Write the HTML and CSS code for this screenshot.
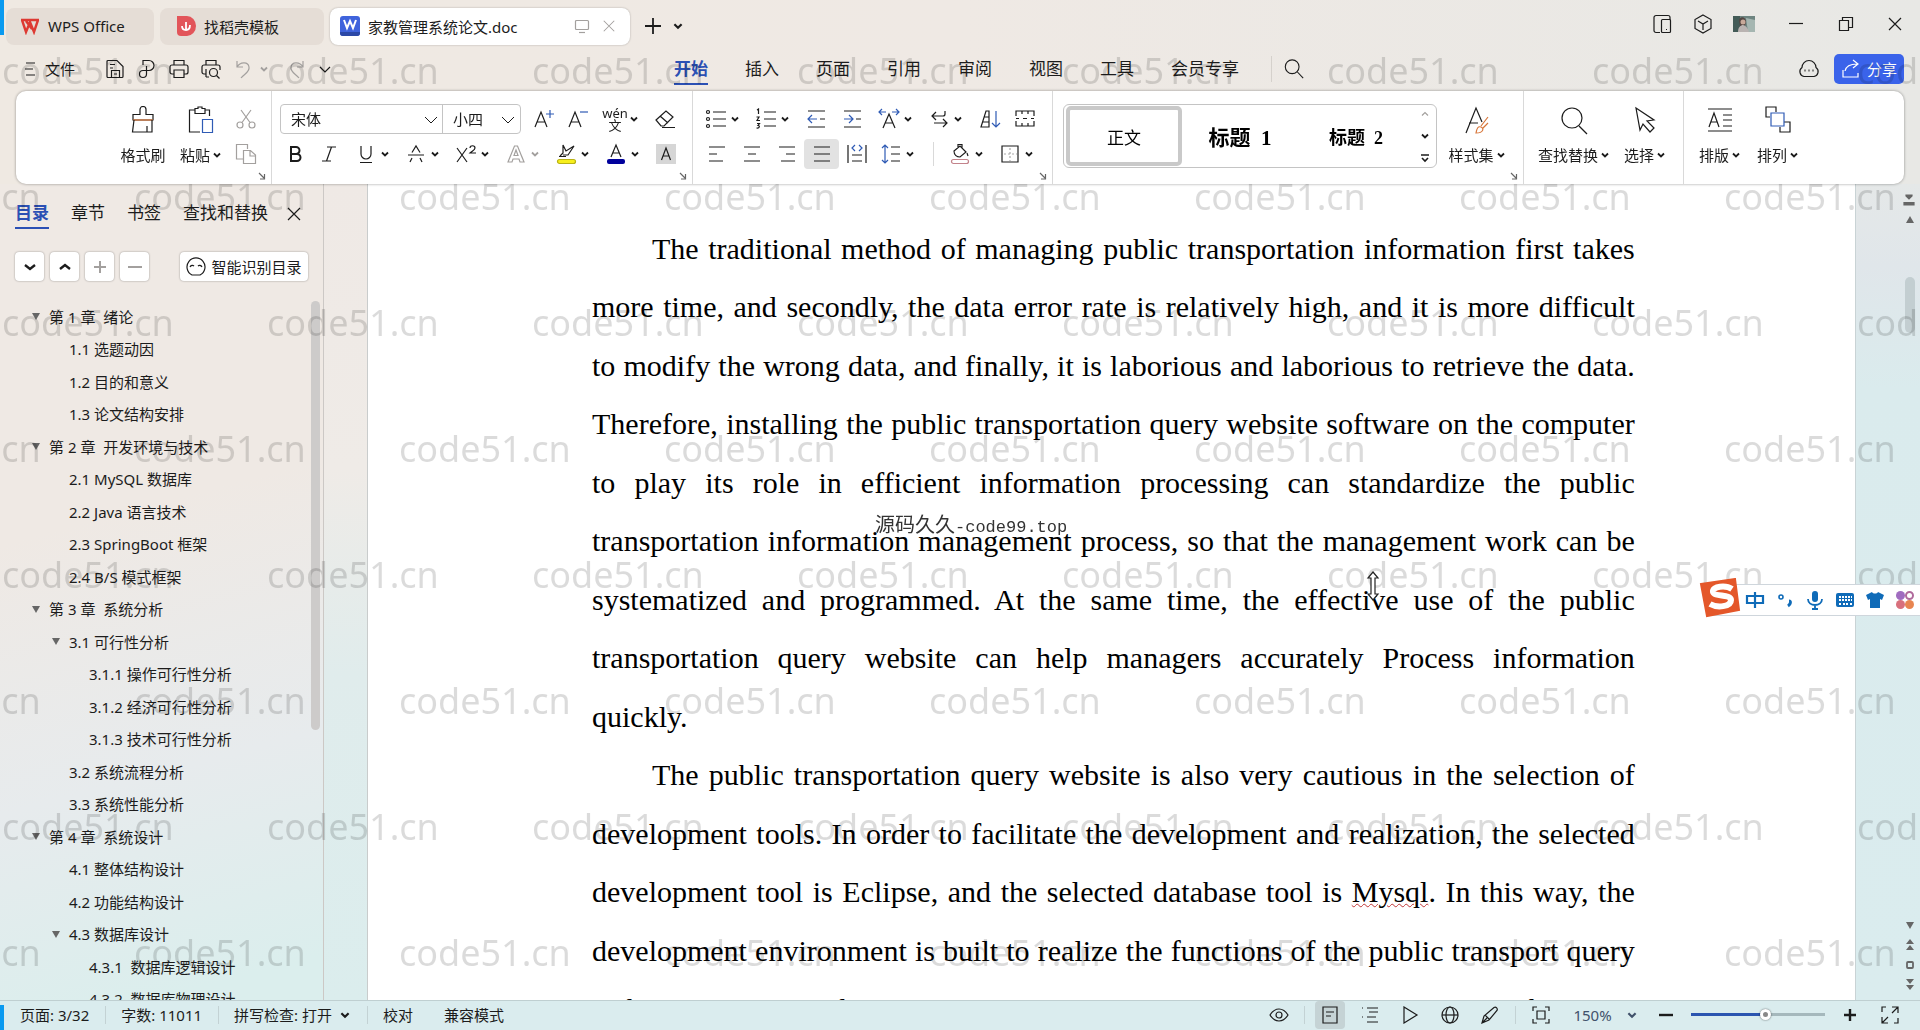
FILE: index.html
```html
<!DOCTYPE html>
<html lang="zh-CN">
<head>
  <meta charset="UTF-8">
  <meta name="viewport" content="width=device-width, initial-scale=1.0">
  <title>家教管理系统论文.doc - WPS Office</title>
  <link rel="stylesheet" href="styles.css">
</head>
<body>
  <!-- Shared icons -->
  <svg class="sprite" width="0" height="0">
    <symbol id="caret" viewBox="0 0 10 10"><path d="M2 3.5l3 3 3-3" stroke-width="1.8"/></symbol>
    <symbol id="corner" viewBox="0 0 8 8"><path d="M1 1l5 5M6.500 2v5H2"/></symbol>
    <symbol id="tri" viewBox="0 0 10 10"><path d="M1 2h8L5 9z" fill="#666" stroke="none"/></symbol>
    <symbol id="close" viewBox="0 0 16 16"><path d="M2 2l12 12M14 2L2 14"/></symbol>
    <symbol id="search" viewBox="0 0 24 24"><circle cx="10" cy="9.500" r="7.500"/><path d="M15.500 15l6.500 7"/></symbol>
  </svg>

  <header class="title-bar">
    <div class="edge-mark"></div>
    <nav class="doc-tabs">
      <button class="doc-tab tab-home">
        <svg width="20" height="18" viewBox="0 0 20 18"><path d="M1 3h18M2 3l4 12 4-10 4 10 4-12M6 4l6 8" stroke="#dd3a33" stroke-width="2.400"/></svg>
        <span>WPS Office</span>
      </button>
      <button class="doc-tab tab-docer">
        <svg width="20" height="20" viewBox="0 0 20 20"><path d="M1 0h10a9 10 0 0 1 0 20H5a4 4 0 0 1-4-4z" fill="#e2555a" stroke="none"/><path d="M10 15V6M10 14c-3 0-4-2-4-4M10 14c3 0 4-2 4-5" stroke="#fff" stroke-width="1.800"/></svg>
        <span>找稻壳模板</span>
      </button>
      <button class="doc-tab tab-doc active">
        <svg width="20" height="20" viewBox="0 0 20 20"><rect width="20" height="20" rx="3" fill="#3f63dc" stroke="none"/><path d="M0 16h20v1a3 3 0 0 1-3 3H3a3 3 0 0 1-3-3z" fill="#2c48a6" stroke="none"/><path d="M4 4l3 8 3-7 3 7 3-8" stroke="#fff" stroke-width="2"/></svg>
        <span class="doc-name">家教管理系统论文.doc</span>
        <svg class="dim" width="16" height="16" viewBox="0 0 16 16"><rect x="1.500" y="2.500" width="13" height="9" rx="1"/><path d="M5 14.500h6"/></svg>
        <svg class="dim" width="14" height="14"><use href="#close"/></svg>
      </button>
    </nav>
    <button class="icon-btn" aria-label="新建"><svg width="18" height="18" viewBox="0 0 18 18"><path d="M9 1v16M1 9h16" stroke-width="1.800"/></svg></button>
    <button class="caret-btn" aria-label="更多"><svg width="12" height="12"><use href="#caret"/></svg></button>
    <div class="window-tools">
      <button aria-label="侧栏"><svg width="20" height="20" viewBox="0 0 20 20"><path d="M8 18.500H4a2 2 0 0 1-2-2v-13a2 2 0 0 1 2-2h12a2 2 0 0 1 2 2V6"/><rect x="9.500" y="5.500" width="9" height="13" rx="1"/><path d="M14 15.500h1"/></svg></button>
      <button aria-label="应用"><svg width="20" height="20" viewBox="0 0 20 20"><path d="M10 1l8 4.500v9L10 19l-8-4.500v-9zM5 7l5 3 5-3M10 10v6"/></svg></button>
      <button class="account" aria-label="账号"><svg width="22" height="16" viewBox="0 0 22 16"><rect width="22" height="16" fill="#6e8480" stroke="none"/><path d="M0 0h7v16H0z" fill="#435b57" stroke="none"/><path d="M13 2l9 2v12h-7z" fill="#a5b6b1" stroke="none"/><path d="M6 5c0-5 7-5 7 1l-1 4H7z" fill="#544743" stroke="none"/><circle cx="10" cy="6" r="2.500" fill="#c8a999" stroke="none"/><path d="M5 16c0-5 3-7 5-7s5 3 6 7z" fill="#b9b3b1" stroke="none"/></svg></button>
      <button aria-label="最小化"><svg width="16" height="16" viewBox="0 0 16 16"><path d="M1 7.500h14"/></svg></button>
      <button aria-label="还原"><svg width="16" height="16" viewBox="0 0 16 16"><path d="M1.500 4.500h9v10h-9zM4.500 4V1.500h10v10H11"/></svg></button>
      <button aria-label="关闭"><svg width="16" height="16"><use href="#close"/></svg></button>
    </div>
  </header>

  <div class="menu-row">
    <div class="quick">
      <button class="file-btn">
        <svg width="12" height="16" viewBox="0 0 12 16"><path d="M2 2h9M1 8h8M2 14h9"/></svg>
        <span>文件</span>
      </button>
      <button aria-label="保存"><svg width="20" height="20" viewBox="0 0 20 20"><path d="M2 17.500v-15a1 1 0 0 1 1-1h9l6 6v10a1 1 0 0 1-1 1H3a1 1 0 0 1-1-1zM5 5.500h5M5 9h3M6.500 18v-6.500h8V18M9 15h3"/></svg></button>
      <button aria-label="输出"><svg width="20" height="20" viewBox="0 0 20 20"><path d="M6 6V1.500h6a5 5 0 0 1 0 10H6a3.500 3.500 0 1 0 3.500 3.500V7"/></svg></button>
      <button aria-label="打印"><svg width="20" height="20" viewBox="0 0 20 20"><path d="M5 6V1.500h10V6M5 15H3a2 2 0 0 1-2-2V8a2 2 0 0 1 2-2h14a2 2 0 0 1 2 2v5a2 2 0 0 1-2 2h-2M5 11h10v7.500H5z"/></svg></button>
      <button aria-label="打印预览"><svg width="20" height="20" viewBox="0 0 20 20"><path d="M5 6V1.500h10V6M5 15H3a2 2 0 0 1-2-2V8a2 2 0 0 1 2-2h14a2 2 0 0 1 2 2v3M5 18V10M5 18h3"/><circle cx="12.500" cy="13.500" r="4"/><path d="M15.500 16.500l3 3"/></svg></button>
      <button class="dim undo" aria-label="撤销"><svg width="20" height="20" viewBox="0 0 20 20"><path d="M4 2v6h6M4 8c3-5 11-6 12 0 1 5-5 7-8 11"/></svg><svg width="10" height="10"><use href="#caret"/></svg></button>
      <button class="dim" aria-label="重做"><svg width="20" height="20" viewBox="0 0 20 20"><path d="M16 2v6h-6M16 8C13 3 5 2 4 8c-1 5 5 7 8 11"/></svg></button>
      <button aria-label="自定义"><svg width="12" height="12" viewBox="0 0 12 12"><path d="M1 4l5 5 5-5"/></svg></button>
    </div>
    <nav class="menu-tabs">
      <a class="active" href="#start">开始</a>
      <a href="#insert">插入</a>
      <a href="#page">页面</a>
      <a href="#refs">引用</a>
      <a href="#review">审阅</a>
      <a href="#view">视图</a>
      <a href="#tools">工具</a>
      <a href="#vip">会员专享</a>
    </nav>
    <button class="search-btn" aria-label="搜索"><svg width="22" height="22"><use href="#search"/></svg></button>
    <div class="menu-right">
      <button aria-label="云"><svg width="22" height="20" viewBox="0 0 22 20"><path d="M6 17.500a5 5 0 0 1-2-9 7 7 0 0 1 14 0 5 5 0 0 1-2 9z"/><path d="M6.500 11.500h1M10.500 11.500h1M14.500 11.500h1" stroke-width="2"/></svg></button>
      <button class="share">
        <svg width="20" height="20" viewBox="0 0 20 20"><path d="M2 11v7h15v-4M4 12c1-5 5-7 12-7M12 1l5 4-5 4"/></svg>
        <span>分享</span>
      </button>
    </div>
  </div>

  <section class="ribbon" id="start">
    <div class="group clipboard">
      <button class="big">
        <svg width="26" height="28" viewBox="0 0 26 28"><path d="M3 10V8.500h7V3.500a3 3 0 0 1 6 0v5h7V14H3z"/><path d="M3 14h20" stroke="#d8763a"/><path d="M4 14L2.500 26H22V14M17 26v-6"/></svg>
        <span>格式刷</span>
      </button>
      <button class="big">
        <svg width="26" height="28" viewBox="0 0 26 28"><path d="M7 4H1.500v22H12M17 4h4.500v6M7 7.500v-5h3V1h4v1.500h3v5z"/><path d="M14.500 13.500h10v13h-10z" stroke="#2f5bb5"/></svg>
        <span>粘贴<svg width="10" height="10"><use href="#caret"/></svg></span>
      </button>
      <div class="stack dim">
        <button aria-label="剪切"><svg width="22" height="22" viewBox="0 0 22 22"><circle cx="5" cy="17" r="3"/><circle cx="17" cy="17" r="3"/><path d="M6 2l9 12.500M16 2L7 14.500"/></svg></button>
        <button aria-label="复制"><svg width="22" height="22" viewBox="0 0 22 22"><path d="M8 16H1.500V1.500h11V6M8.500 7.500h7l5 4.500v8.500h-12zM15 8v5h5"/></svg></button>
      </div>
      <svg class="corner" width="8" height="8"><use href="#corner"/></svg>
    </div>

    <div class="group font">
      <div class="row">
        <div class="combo">
          <label class="font-name"><select aria-label="字体"><option>宋体</option></select><svg width="14" height="14" viewBox="0 0 14 14"><path d="M1 4l6 6 6-6"/></svg></label>
          <label class="font-size"><select aria-label="字号"><option>小四</option></select><svg width="14" height="14" viewBox="0 0 14 14"><path d="M1 4l6 6 6-6"/></svg></label>
        </div>
        <button class="tool" aria-label="增大字号"><svg width="22" height="22" viewBox="0 0 22 22"><path d="M2 19L8 4l6 15M4 14h8"/><path d="M17 2v8M13 6h8" stroke="#2f5bb5"/></svg></button>
        <button class="tool" aria-label="减小字号"><svg width="22" height="22" viewBox="0 0 22 22"><path d="M2 19L8 4l6 15M4 14h8"/><path d="M13 4h8" stroke="#2f5bb5"/></svg></button>
        <button class="tool drop after-gap" aria-label="拼音"><span class="pinyin"><span>wén</span><span>文</span></span><svg width="10" height="10"><use href="#caret"/></svg></button>
        <button class="tool" aria-label="清除格式"><svg width="22" height="22" viewBox="0 0 22 22"><path d="M2 12L12 3l7 6-9 9H7zM6 8l8 7M8 19.500h13"/></svg></button>
      </div>
      <div class="row">
        <button class="tool" aria-label="加粗"><svg width="22" height="22" viewBox="0 0 22 22"><path d="M7 4h5a3.500 3.500 0 0 1 0 7H7zM7 11h6a3.500 3.500 0 0 1 0 7H7z" stroke-width="2"/></svg></button>
        <button class="tool" aria-label="倾斜"><svg width="22" height="22" viewBox="0 0 22 22"><path d="M9 4h9M13.500 4l-5 14M4 18h9"/></svg></button>
        <button class="tool drop after-gap" aria-label="下划线"><svg width="22" height="22" viewBox="0 0 22 22"><path d="M6 3v8a5 5 0 0 0 10 0V3M5 19.500h12"/></svg><svg width="10" height="10"><use href="#caret"/></svg></button>
        <button class="tool drop" aria-label="删除线"><svg width="22" height="22" viewBox="0 0 22 22"><path d="M3 12h16M7 9.500L11 3l4 6.500M5 19l2-4M17 19l-2-4"/></svg><svg width="10" height="10"><use href="#caret"/></svg></button>
        <button class="tool drop" aria-label="上标"><svg width="22" height="22" viewBox="0 0 22 22"><path d="M2 5l10 14M12 5L2 19M15 5c0-3 5-3 5 0 0 2-3 3-5 5h6"/></svg><svg width="10" height="10"><use href="#caret"/></svg></button>
        <button class="tool drop dim" aria-label="文字效果"><svg width="22" height="22" viewBox="0 0 22 22"><path d="M3 19L9.500 3h3L19 19h-4l-1-3H8l-1 3zM9 12.500h4L11 7z"/></svg><svg width="10" height="10"><use href="#caret"/></svg></button>
        <button class="tool drop" aria-label="突出显示"><svg width="22" height="22" viewBox="0 0 22 22"><rect x="2.500" y="16.500" width="18" height="4" rx="2" fill="#f7ef1c" stroke="#b9b215"/><path d="M4 13.500h7M5 13l3-3V2l3 6 8-5-6 9H8"/></svg><svg width="10" height="10"><use href="#caret"/></svg></button>
        <button class="tool drop" aria-label="字体颜色"><svg width="22" height="22" viewBox="0 0 22 22"><path d="M6 14l5-12 5 12M7.500 10h7"/><rect x="2" y="16" width="18" height="5" rx="2" fill="#00009c" stroke="none"/></svg><svg width="10" height="10"><use href="#caret"/></svg></button>
        <button class="tool" aria-label="字符底纹"><svg width="22" height="22" viewBox="0 0 22 22"><rect x="1" y="1" width="20" height="20" fill="#d6d6d6" stroke="none"/><path d="M6.500 17L11 5l4.500 12M8 13h6"/></svg></button>
      </div>
      <svg class="corner" width="8" height="8"><use href="#corner"/></svg>
    </div>

    <div class="group paragraph">
      <div class="row">
        <button class="tool drop" aria-label="项目符号"><svg width="22" height="22" viewBox="0 0 22 22"><path d="M8 4h13M8 11h13M8 18h13"/><circle cx="3" cy="4" r="1.500"/><circle cx="3" cy="11" r="1.500"/><circle cx="3" cy="18" r="1.500"/></svg><svg width="10" height="10"><use href="#caret"/></svg></button>
        <button class="tool drop" aria-label="编号"><svg width="22" height="22" viewBox="0 0 22 22"><path d="M9 4h12M9 11h12M9 18h12M2 2l1.500-1v5M1.500 9H4L2 12.500h3M2 15.500h2.500L3 17.500c2 0 2 3-1.500 2.500"/></svg><svg width="10" height="10"><use href="#caret"/></svg></button>
        <button class="tool" aria-label="减少缩进"><svg width="22" height="22" viewBox="0 0 22 22"><path d="M2 3h17M14 11h5M2 19h17" /><path d="M11 11H2M6 7l-4 4 4 4" stroke="#2f5bb5"/></svg></button>
        <button class="tool" aria-label="增加缩进"><svg width="22" height="22" viewBox="0 0 22 22"><path d="M3 3h17M15 11h5M3 19h17"/><path d="M3 11h9M8 7l4 4-4 4" stroke="#2f5bb5"/></svg></button>
        <button class="tool drop after-gap" aria-label="中文版式"><svg width="22" height="22" viewBox="0 0 22 22"><path d="M5 20l6-14 6 14M7 15h8"/><path d="M1 4h7M4 1L1 4l3 3M21 4h-7M18 1l3 3-3 3" stroke="#2f5bb5"/></svg><svg width="10" height="10"><use href="#caret"/></svg></button>
        <button class="tool drop" aria-label="换行"><svg width="22" height="22" viewBox="0 0 22 22"><path d="M17 3v3a2 2 0 0 1-2 2H4M8 4L4 8l4 4M6 15h13M15 11l4 4-4 4"/></svg><svg width="10" height="10"><use href="#caret"/></svg></button>
        <button class="tool" aria-label="排序"><svg width="22" height="22" viewBox="0 0 22 22"><path d="M2 19L7 3h3v16zM4 14h6M5 9h5"/><path d="M17 3v16M13 15l4 4 4-4" stroke="#2f5bb5"/></svg></button>
        <button class="tool" aria-label="制表位"><svg width="22" height="22" viewBox="0 0 22 22"><path d="M2 8V3h18v5M2 13v5h18v-5M8 3v3M14 3v3M8 18v-3M14 18v-3M2 10.500h3M9 10.500h4M17 10.500h3"/></svg></button>
      </div>
      <div class="row">
        <button class="tool" aria-label="左对齐"><svg width="22" height="22" viewBox="0 0 22 22"><path d="M3 4h16M3 11h8M3 18h14"/></svg></button>
        <button class="tool" aria-label="居中"><svg width="22" height="22" viewBox="0 0 22 22"><path d="M3 4h16M7 11h8M3 18h16"/></svg></button>
        <button class="tool" aria-label="右对齐"><svg width="22" height="22" viewBox="0 0 22 22"><path d="M3 4h16M10 11h9M5 18h14"/></svg></button>
        <button class="tool selected" aria-label="两端对齐"><svg width="22" height="22" viewBox="0 0 22 22"><path d="M3 4h16M3 11h16M3 18h16"/></svg></button>
        <button class="tool" aria-label="分散对齐"><svg width="22" height="22" viewBox="0 0 22 22"><path d="M2 2v18M20 2v18M6 12h10M6 18h10"/><path d="M9 2L6 5l3 3M13 2l3 3-3 3" stroke="#2f5bb5"/></svg></button>
        <button class="tool drop" aria-label="行距"><svg width="22" height="22" viewBox="0 0 22 22"><path d="M11 4h9M11 11h9M11 18h9"/><path d="M5 2v18M2 5l3-3 3 3M2 17l3 3 3-3" stroke="#2f5bb5"/></svg><svg width="10" height="10"><use href="#caret"/></svg></button>
        <span class="divider"></span>
        <button class="tool drop" aria-label="底纹"><svg width="22" height="22" viewBox="0 0 22 22"><path d="M5 8l6-5 6 6-6 5c-3 0-6-2-6-6zM9 5V1.500h4V5M18 10l1 3"/><rect x="2.500" y="16.500" width="17" height="4" rx="2" stroke="#c3838b"/></svg><svg width="10" height="10"><use href="#caret"/></svg></button>
        <button class="tool drop" aria-label="边框"><svg width="22" height="22" viewBox="0 0 22 22"><path d="M3 3h16v16H3z"/><path d="M11 5v13M5 11h13" stroke="#aaa" stroke-dasharray="2 2"/></svg><svg width="10" height="10"><use href="#caret"/></svg></button>
      </div>
      <svg class="corner" width="8" height="8"><use href="#corner"/></svg>
    </div>

    <div class="group styles">
      <div class="gallery">
        <button class="style-item current">正文</button>
        <button class="style-item heading-1">标题&nbsp; 1</button>
        <button class="style-item heading-2">标题&nbsp; 2</button>
        <div class="gallery-nav">
          <button class="dim" aria-label="上一行"><svg width="10" height="10" viewBox="0 0 10 10"><path d="M2 6.500l3-3 3 3"/></svg></button>
          <button aria-label="下一行"><svg width="10" height="10"><use href="#caret"/></svg></button>
          <button aria-label="展开"><svg width="10" height="10" viewBox="0 0 10 10"><path d="M1 2h8M2 5l3 3 3-3" stroke-width="1.600"/></svg></button>
        </div>
      </div>
      <button class="big">
        <svg width="28" height="30" viewBox="0 0 28 30"><path d="M3 27L13 2l6 14M6 17h9"/><path d="M25 11l-7 9M25 17l-5 5M13 27c1-5 2-7 5-6 3 1 3 6-5 6z" stroke="#d8763a"/></svg>
        <span>样式集<svg width="10" height="10"><use href="#caret"/></svg></span>
      </button>
      <svg class="corner" width="8" height="8"><use href="#corner"/></svg>
    </div>

    <div class="group editing">
      <button class="big">
        <svg width="30" height="30" viewBox="0 0 30 30"><circle cx="13" cy="12" r="10"/><path d="M20 20l8 8"/></svg>
        <span>查找替换<svg width="10" height="10"><use href="#caret"/></svg></span>
      </button>
      <button class="big">
        <svg width="28" height="28" viewBox="0 0 28 28"><path d="M5 2l18 12-7 1 7 7-4 4-7-8-3 6z"/></svg>
        <span>选择<svg width="10" height="10"><use href="#caret"/></svg></span>
      </button>
    </div>

    <div class="group layout">
      <button class="big">
        <svg width="28" height="28" viewBox="0 0 28 28"><path d="M2 3h24M2 25h24M17 9h9M17 14h9M17 20h9M3 21L8 7l5 14M5 16h6"/></svg>
        <span>排版<svg width="10" height="10"><use href="#caret"/></svg></span>
      </button>
      <button class="big">
        <svg width="28" height="28" viewBox="0 0 28 28"><path d="M6 11H2V1h10v5M20 16h6v10H16v-5"/><path d="M7 7h13v13H7z" stroke="#2f5bb5"/></svg>
        <span>排列<svg width="10" height="10"><use href="#caret"/></svg></span>
      </button>
    </div>
  </section>

  <main class="workspace">
    <aside class="outline">
      <nav class="outline-tabs">
        <a class="active" href="#toc">目录</a>
        <a href="#chapters">章节</a>
        <a href="#bookmarks">书签</a>
        <a href="#find">查找和替换</a>
        <button aria-label="关闭"><svg width="16" height="16"><use href="#close"/></svg></button>
      </nav>
      <div class="outline-tools">
        <button class="sq" aria-label="展开"><svg width="14" height="14" viewBox="0 0 14 14"><path d="M2 5l5 4 5-4" stroke-width="2.400"/></svg></button>
        <button class="sq" aria-label="收起"><svg width="14" height="14" viewBox="0 0 14 14"><path d="M2 9l5-4 5 4" stroke-width="2.400"/></svg></button>
        <button class="sq dim" aria-label="增加级别"><svg width="14" height="14" viewBox="0 0 14 14"><path d="M7 1v12M1 7h12" stroke-width="2"/></svg></button>
        <button class="sq dim" aria-label="减少级别"><svg width="14" height="14" viewBox="0 0 14 14"><path d="M0 7h14" stroke-width="2"/></svg></button>
        <button class="smart"><svg width="20" height="20" viewBox="0 0 20 20"><path d="M6 18a9 9 0 1 1 8 0zM4 10c1-2 3-2 4-1M12 9c1-1 3-1 4 1"/></svg>智能识别目录</button>
      </div>
      <div class="tree-wrap">
        <ul class="tree" id="toc">
          <li class="l1"><svg width="10" height="10"><use href="#tri"/></svg>第 1 章&nbsp; 绪论</li>
          <li class="l2">1.1 选题动因</li>
          <li class="l2">1.2 目的和意义</li>
          <li class="l2">1.3 论文结构安排</li>
          <li class="l1"><svg width="10" height="10"><use href="#tri"/></svg>第 2 章&nbsp; 开发环境与技术</li>
          <li class="l2">2.1 MySQL 数据库</li>
          <li class="l2">2.2 Java 语言技术</li>
          <li class="l2">2.3 SpringBoot 框架</li>
          <li class="l2">2.4 B/S 模式框架</li>
          <li class="l1"><svg width="10" height="10"><use href="#tri"/></svg>第 3 章&nbsp; 系统分析</li>
          <li class="l2"><svg width="10" height="10"><use href="#tri"/></svg>3.1 可行性分析</li>
          <li class="l3">3.1.1 操作可行性分析</li>
          <li class="l3">3.1.2 经济可行性分析</li>
          <li class="l3">3.1.3 技术可行性分析</li>
          <li class="l2">3.2 系统流程分析</li>
          <li class="l2">3.3 系统性能分析</li>
          <li class="l1"><svg width="10" height="10"><use href="#tri"/></svg>第 4 章&nbsp; 系统设计</li>
          <li class="l2">4.1 整体结构设计</li>
          <li class="l2">4.2 功能结构设计</li>
          <li class="l2"><svg width="10" height="10"><use href="#tri"/></svg>4.3 数据库设计</li>
          <li class="l3">4.3.1&nbsp; 数据库逻辑设计</li>
          <li class="l3">4.3.2&nbsp; 数据库物理设计</li>
        </ul>
        <div class="tree-scroll"></div>
      </div>
    </aside>

    <article class="page">
      <div class="text">
        <p class="indent">The traditional method of managing public transportation information first takes</p>
        <p>more time, and secondly, the data error rate is relatively high, and it is more difficult</p>
        <p>to modify the wrong data, and finally, it is laborious and laborious to retrieve the data.</p>
        <p>Therefore, installing the public transportation query website software on the computer</p>
        <p>to play its role in efficient information processing can standardize the public</p>
        <p>transportation information management process, so that the management work can be</p>
        <p>systematized and programmed. At the same time, the effective use of the public</p>
        <p>transportation query website can help managers accurately Process information</p>
        <p class="last">quickly.</p>
        <p class="indent">The public transportation query website is also very cautious in the selection of</p>
        <p>development tools. In order to facilitate the development and realization, the selected</p>
        <p>development tool is Eclipse, and the selected database tool is <span class="spell">Mysql</span>. In this way, the</p>
        <p>development environment is built to realize the functions of the public transport query</p>
        <p class="last">website. A user can then move on in time to a more exact query, as a new combination.</p>
      </div>
    </article>

    <div class="gutter">
      <svg width="12" height="12" viewBox="0 0 12 12"><path d="M3 1h6v1L6 5 3 2zM1 8v3h10V8M4 8v2M8 8v2" fill="#666" stroke="#666"/></svg>
      <svg class="flip" width="10" height="10"><use href="#tri"/></svg>
      <div class="gutter-thumb"></div>
      <svg class="gutter-down" width="10" height="10"><use href="#tri"/></svg>
      <svg width="10" height="12" viewBox="0 0 10 12"><path d="M5 0l4 5H1zM5 6l4 5H1z" fill="#666" stroke="none"/></svg>
      <svg width="10" height="10" viewBox="0 0 10 10"><rect x="2" y="2" width="6" height="6" rx="1" stroke="#666" stroke-width="1.800"/></svg>
      <svg width="10" height="12" viewBox="0 0 10 12"><path d="M5 5L1 0h8zM5 11L1 6h8z" fill="#666" stroke="none"/></svg>
    </div>
  </main>

  <footer class="status">
    <div class="edge-mark"></div>
    <span class="cell">页面: 3/32</span>
    <span class="cell">字数: 11011</span>
    <span class="cell">拼写检查: 打开<svg width="12" height="12"><use href="#caret"/></svg></span>
    <span class="cell">校对</span>
    <span class="cell">兼容模式</span>
    <div class="status-tools">
      <button aria-label="护眼"><svg width="20" height="20" viewBox="0 0 20 20"><path d="M1 10c5-8 13-8 18 0-5 8-13 8-18 0z"/><circle cx="10" cy="10" r="3"/></svg></button>
      <span class="sep"></span>
      <button class="selected" aria-label="页面视图"><svg width="18" height="18" viewBox="0 0 18 18"><path d="M2 1h14v16H2zM5 6h8M5 10h5"/></svg></button>
      <button aria-label="大纲"><svg width="20" height="18" viewBox="0 0 20 18"><path d="M7 2h11M9 6h9M7 11h9M7 16h11M2 2h1M2 11h1"/></svg></button>
      <button aria-label="播放"><svg width="18" height="18" viewBox="0 0 18 18"><path d="M3 1l13 8-13 8z"/></svg></button>
      <button aria-label="网页"><svg width="18" height="18" viewBox="0 0 18 18"><circle cx="9" cy="9" r="8"/><ellipse cx="9" cy="9" rx="4" ry="8"/><path d="M1 9h16"/></svg></button>
      <button aria-label="写作"><svg width="18" height="18" viewBox="0 0 18 18"><path d="M1 17l2-7L13 1.500c2-1 4 1 3 3L8 14zM4 9l4 4M1 17l5-5"/></svg></button>
      <span class="sep"></span>
      <button aria-label="适应"><svg width="18" height="18" viewBox="0 0 18 18"><path d="M1 5V1h4M13 1h4v4M17 13v4h-4M5 17H1v-4M5 5h8v8H5z"/></svg></button>
      <button class="zoom-value">150%<svg width="12" height="12"><use href="#caret"/></svg></button>
      <button aria-label="缩小"><svg width="14" height="14" viewBox="0 0 14 14"><path d="M0 7h14" stroke-width="2.400"/></svg></button>
      <input class="zoom" type="range" min="0" max="100" value="56" aria-label="缩放">
      <button aria-label="放大"><svg width="14" height="14" viewBox="0 0 14 14"><path d="M1 7h12M7 1v12" stroke-width="2.400"/></svg></button>
      <button aria-label="全屏"><svg width="18" height="18" viewBox="0 0 18 18"><path d="M1 6V1h4M17 12v5h-4M11 1h6v6M17 1l-6 6M1 11v6h6M1 17l6-6"/></svg></button>
    </div>
  </footer>

  <!-- Repeating watermark over the whole window -->
  <svg class="watermark" width="100%" height="100%">
    <defs>
      <pattern id="mark" width="265" height="252" patternUnits="userSpaceOnUse">
        <text x="2" y="84">code51.cn</text>
        <text x="134" y="210">code51.cn</text>
        <text x="-131" y="210">code51.cn</text>
      </pattern>
    </defs>
    <rect width="100%" height="100%" fill="url(#mark)"/>
  </svg>
  <div class="site-mark">源码久久<span>-code99.top</span></div>

  <svg class="pointer" width="14" height="30" viewBox="0 0 14 30"><path d="M7 1l5 6H9v16h3l-5 6-5-6h3V7H2z" fill="#fff" stroke="#222"/></svg>

  <!-- Input method bar -->
  <div class="ime">
    <svg class="ime-logo" width="42" height="40" viewBox="0 0 42 40"><path d="M2 6L36 1l4 31-32 6z" fill="#e4572a" stroke="#e4572a" stroke-width="2"/><path d="M33 11c-6-4-20-3-19 3 1 5 18 2 18 8 0 7-14 8-21 4" stroke="#fff" stroke-width="6"/></svg>
    <svg width="20" height="20" viewBox="0 0 20 20"><path d="M2 6h16v7H2zM10 2v16" stroke-width="2.200"/></svg>
    <svg width="20" height="20" viewBox="0 0 20 20"><circle cx="6" cy="7" r="2" stroke-width="1.600"/><path d="M14 11c2 0 2 3-1 5" stroke-width="3"/></svg>
    <svg width="20" height="20" viewBox="0 0 20 20"><rect x="7" y="1" width="6" height="11" rx="3" fill="#0f6bb8" stroke="none"/><path d="M3 9c0 8 14 8 14 0M10 15v3M7 19h6" stroke-width="1.800"/></svg>
    <svg width="20" height="20" viewBox="0 0 20 20"><rect x="1" y="3" width="18" height="14" rx="2" fill="#0f6bb8" stroke="none"/><path d="M4 7h13M4 10h13M4 14h2M8 14h5M15 14h2" stroke="#fff" stroke-width="2" stroke-dasharray="2 1"/></svg>
    <svg width="20" height="20" viewBox="0 0 20 20"><path d="M7 2c1 2 5 2 6 0l6 3-2 5-2-1v9H5V9l-2 1-2-5z" fill="#0f6bb8" stroke="none"/></svg>
    <svg width="20" height="20" viewBox="0 0 20 20"><circle cx="5.500" cy="5.500" r="4.500" fill="#a06cc0" stroke="none"/><circle cx="14.500" cy="5.500" r="3.500" stroke="#b06a9c" stroke-width="2"/><circle cx="5.500" cy="14.500" r="4.500" fill="#d8707c" stroke="none"/><circle cx="14.500" cy="14.500" r="4.500" fill="#e88550" stroke="none"/></svg>
  </div>
</body>
</html>
```
FILE: styles.css
```css
* {
  box-sizing: border-box;
}
body {
  margin: 0;
  height: 100vh;
  display: flex;
  flex-direction: column;
  overflow: hidden;
  font-family: "Noto Sans", "Noto Sans CJK SC", sans-serif;
  font-size: 15px;
  color: #1c1c1c;
  background: linear-gradient(to right, #efe9e2, #efe9e4 50%, #e8e8e5);
}
svg {
  fill: none;
  stroke: currentColor;
  stroke-width: 1.2;
  flex: none;
}
.sprite {
  position: absolute;
}
button {
  font: inherit;
  color: inherit;
  background: none;
  border: none;
  padding: 0;
  display: flex;
  align-items: center;
  justify-content: center;
  white-space: nowrap;
}
a {
  color: inherit;
  text-decoration: none;
}
.dim {
  color: #a3a09e;
}

/* Title bar */
.title-bar {
  height: 46px;
  display: flex;
  align-items: center;
  padding-top: 6px;
}
.edge-mark {
  position: absolute;
  left: 0;
  width: 4px;
  height: 35px;
  top: 0;
  background: #0a9af0;
}
.doc-tabs {
  display: flex;
  gap: 6px;
  margin-left: 6px;
}
.doc-tab {
  height: 37px;
  padding: 0 14px;
  gap: 8px;
  justify-content: flex-start;
  border-radius: 8px;
  background: #e5ddd6;
}
.tab-home {
  width: 148px;
}
.tab-docer {
  width: 164px;
  padding-left: 16px;
}
.tab-doc {
  width: 300px;
  padding-left: 10px;
}
.doc-tab.active {
  background: #fff;
  box-shadow: 0 0 2px rgba(0, 0, 0, 0.3);
}
.doc-name {
  flex: 1;
  text-align: left;
}
.doc-tab .dim + .dim {
  margin-left: 4px;
}
.icon-btn {
  margin-left: 14px;
}
.caret-btn {
  margin-left: 10px;
}
.window-tools {
  margin-left: auto;
  display: flex;
  margin-right: 5px;
  margin-bottom: 4px;
}
.window-tools button {
  width: 41px;
}
.window-tools .account {
  margin-right: 7px;
}
.window-tools button:nth-child(n+4) {
  width: 50px;
}
.window-tools button:last-child {
  width: 40px;
  margin-left: 4px;
}

/* Menu row */
.menu-row {
  height: 45px;
  display: flex;
  align-items: center;
}
.quick {
  width: 35%;
  display: flex;
  align-items: center;
  padding-left: 24px;
  gap: 12px;
}
.file-btn {
  gap: 9px;
  margin-right: 18px;
}
.undo svg + svg {
  margin: 0 6px 0 6px;
}
.menu-tabs {
  display: flex;
  gap: 37px;
  font-size: 17px;
  margin-left: 2px;
}
.menu-tabs a {
  line-height: 28px;
  padding-top: 3px;
  border-bottom: 2px solid transparent;
}
.menu-tabs .active,
.outline-tabs .active {
  color: #2b50b4;
  font-weight: bold;
  border-bottom-color: #2b50b4;
}
.search-btn {
  margin-left: 32px;
  padding-left: 11px;
  border-left: 1px solid #d5d1cc;
  height: 26px;
}
.menu-right {
  margin-left: auto;
  margin-right: 16px;
  display: flex;
  gap: 14px;
}
.share {
  width: 70px;
  height: 30px;
  gap: 6px;
  border-radius: 5px;
  background: #3a63ea;
  color: #fff;
}

/* Ribbon */
.ribbon {
  position: relative;
  z-index: 2;
  height: 93px;
  margin: 0 16px;
  display: flex;
  background: #fff;
  border-radius: 10px;
  box-shadow: 0 0 3px rgba(0, 0, 0, 0.4);
}
.group {
  position: relative;
  display: flex;
  padding: 13px 0 0;
  margin: 0;
  border-right: 1px solid #d9d9d9;
}
.group:last-child {
  border-right: none;
}
.corner {
  position: absolute;
  right: 5px;
  bottom: 4px;
  color: #666;
}
.row {
  display: flex;
  align-items: center;
  height: 30px;
}
.font,
.paragraph {
  flex-direction: column;
  gap: 5px;
}
.clipboard {
  width: 256px;
  padding-left: 98px;
}
.font {
  width: 421px;
  padding-left: 6px;
}
.paragraph {
  width: 360px;
  padding-left: 6px;
}
.styles {
  width: 471px;
  padding-left: 10px;
}
.editing {
  width: 160px;
  padding-left: 10px;
}
.layout {
  padding-left: 7px;
}
.big {
  flex-direction: column;
  justify-content: space-between;
  width: 58px;
  height: 61px;
}
.big > svg {
  margin-top: 2px;
}
.big span {
  display: flex;
  align-items: center;
  line-height: 20px;
}
.big span svg {
  margin-left: 2px;
}
.editing .big:first-child {
  width: 80px;
}
.editing .big:last-child {
  width: 62px;
}
.styles .big {
  width: 80px;
}
.stack {
  display: flex;
  flex-direction: column;
  gap: 13px;
  padding: 4px 0 0 5px;
}
.tool {
  width: 35px;
  height: 30px;
  border-radius: 4px;
}
.tool.drop {
  width: 50px;
  justify-content: flex-start;
  padding-left: 6px;
  gap: 3px;
}
.font .tool {
  width: 34px;
}
.font .tool.drop {
  width: 50px;
}
.tool.after-gap {
  margin-left: 3px;
}
.tool.selected,
.status .selected {
  background: #e2e2e2;
}
.divider {
  height: 24px;
  margin: 0 9px;
  border-left: 1px solid #d9d9d9;
}
.combo {
  display: flex;
  width: 241px;
  height: 30px;
  margin: 0 6px 0 2px;
  border: 1px solid #c4c4c4;
  border-radius: 4px;
}
.combo label {
  position: relative;
  display: flex;
}
.combo select {
  appearance: none;
  width: 100%;
  font: inherit;
  color: inherit;
  border: none;
  background: none;
  padding: 0 10px;
}
.combo svg {
  position: absolute;
  right: 5px;
  top: 8px;
  stroke-width: 1;
}
.font-name {
  flex: 1;
  border-right: 1px solid #c4c4c4;
}
.font-size {
  width: 77px;
}
.font-name svg {
  right: 4px;
}
.pinyin {
  width: 22px;
  display: flex;
  flex-direction: column;
  align-items: center;
  font-size: 13px;
  line-height: 12px;
}
.gallery {
  display: flex;
  align-items: center;
  width: 374px;
  height: 64px;
  padding: 2px;
  border: 1px solid #c4c4c4;
  border-radius: 6px;
}
.style-item {
  width: 116px;
  height: 60px;
  font-family: "Liberation Serif", "Noto Sans CJK SC", serif;
  color: #000;
}
.style-item.current {
  font-size: 17px;
  border: 4px solid #c9c9c9;
  border-radius: 5px;
}
.heading-1 {
  font-size: 21px;
  font-weight: bold;
}
.heading-2 {
  font-size: 18px;
  font-weight: bold;
}
.gallery-nav {
  flex: 1;
  display: flex;
  flex-direction: column;
  align-items: flex-end;
  gap: 12px;
  padding-right: 4px;
}

/* Workspace */
.workspace {
  flex: 1;
  min-height: 0;
  display: flex;
  background: linear-gradient(to bottom, #efe9e5, #efebe7 35%, #e0ecec 60%, #dbeded);
}
.outline {
  width: 324px;
  display: flex;
  flex-direction: column;
  background: linear-gradient(165deg, #efe9e4 40%, #e7ebed 70%, #dbeeed 95%);
  border-right: 1px solid #ccc8c5;
}
.outline-tabs {
  display: flex;
  align-items: center;
  gap: 22px;
  padding: 15px 0 0 15px;
  font-size: 17px;
}
.outline-tabs a {
  line-height: 28px;
  border-bottom: 2px solid transparent;
}
.outline-tabs button {
  margin-left: -4px;
}
.outline-tools {
  display: flex;
  gap: 6px;
  padding: 23px 0 0 15px;
}
.outline-tools button {
  height: 29px;
  background: #fff;
  border-radius: 4px;
  box-shadow: 0 0 2px rgba(0, 0, 0, 0.4);
}
.sq {
  width: 29px;
}
.smart {
  width: 128px;
  margin-left: 25px;
  gap: 5px;
}
.tree-wrap {
  flex: 1;
  min-height: 0;
  display: flex;
  overflow: hidden;
  padding-top: 19px;
}
.tree {
  flex: 1;
  margin: 0;
  padding: 0;
  list-style: none;
  display: grid;
  grid-auto-rows: 32px 33px;
}
.tree li {
  display: flex;
  align-items: center;
  white-space: nowrap;
}
.tree svg {
  width: 10px;
  margin: 0 8px 0 -18px;
}
.tree .l1 {
  padding-left: 49px;
}
.tree .l2 {
  padding-left: 69px;
}
.tree .l3 {
  padding-left: 89px;
}
.tree-scroll {
  width: 9px;
  height: 429px;
  margin: 1px 3px 0 0;
  border-radius: 5px;
  background: #cdcbca;
}
.page {
  flex: 1;
  margin-left: 43px;
  padding: 36px 231px 0 224px;
  overflow: hidden;
  background: #fff;
  border-left: 1px solid #c9cccc;
  border-right: 1px solid #c9d3d5;
}
.text {
  display: grid;
  grid-auto-rows: 58px 59px;
  font-family: "Liberation Serif", serif;
  font-size: 30px;
  line-height: 58px;
  color: #000;
}
.text p {
  margin: 0;
  white-space: nowrap;
  text-align: justify;
  text-align-last: justify;
}
.text .indent {
  padding-left: 60px;
}
.text .last {
  text-align-last: left;
}
.spell {
  text-decoration: underline wavy #c03434 1px;
}
.gutter {
  width: 64px;
  display: flex;
  flex-direction: column;
  align-items: flex-end;
  gap: 9px;
  padding: 10px 5px 9px 0;
  background: linear-gradient(to bottom, #e5e8e8, #e0e6ea 10%, #daebed 25%, #daecee);
}
.flip {
  transform: rotate(180deg);
}
.gutter-thumb {
  width: 10px;
  height: 56px;
  margin-top: 43px;
  border-radius: 5px;
  background: #c3ced1;
}
.gutter-down {
  margin-top: auto;
}

/* Status bar */
.status {
  position: relative;
  height: 30px;
  display: flex;
  align-items: center;
  padding: 0 0 2px 5px;
  background: #daecee;
  border-top: 1px solid #bfcfd1;
}
.status .edge-mark {
  top: 4px;
}
.cell {
  display: flex;
  align-items: center;
  gap: 7px;
  padding: 0 16px 0 15px;
  line-height: 18px;
  border-right: 1px solid #c3d2d4;
}
.cell:nth-of-type(4),
.cell:nth-of-type(5) {
  border-right: none;
}
.status-tools {
  margin-left: auto;
  margin-right: 15px;
  display: flex;
  align-items: center;
  gap: 10px;
}
.status-tools button {
  width: 30px;
  height: 28px;
  border-radius: 4px;
}
.status-tools .selected {
  background: #c5d3d5;
}
.status-tools .sep {
  height: 18px;
  border-left: 1px solid #c3d2d4;
}
.status-tools .zoom-value {
  width: 63px;
  gap: 14px;
  margin: 0 4px 0 8px;
  color: #41526b;
}
.zoom {
  appearance: none;
  width: 134px;
  height: 3px;
  margin: 0;
  background: linear-gradient(to right, #2b55b0 56%, #a5b8bc 56%);
}
.zoom::-webkit-slider-thumb {
  appearance: none;
  width: 11px;
  height: 11px;
  border: 3px solid #fff;
  border-radius: 50%;
  background: #888;
  box-shadow: 0 0 2px rgba(0, 0, 0, 0.6);
}

/* Overlays */
.watermark {
  position: fixed;
  left: 0;
  top: 0;
  stroke: none;
  pointer-events: none;
}
.watermark text {
  font-family: "Noto Sans", sans-serif;
  font-size: 36px;
  fill: rgba(0, 0, 0, 0.14);
}
.site-mark {
  position: absolute;
  left: 875px;
  top: 509px;
  font-size: 20px;
  color: #333;
}
.site-mark span {
  font-family: "Liberation Mono", monospace;
  font-size: 17px;
}
.pointer {
  position: absolute;
  left: 1366px;
  top: 571px;
}
.ime {
  position: absolute;
  right: 0;
  top: 584px;
  height: 32px;
  padding-right: 5px;
  display: flex;
  align-items: center;
  gap: 10px;
  background: #fff;
  border: 1px solid #cfd6dc;
  border-right: none;
  color: #0f6bb8;
}
.ime-logo {
  margin: -4px -6px 0 -14px;
}
```
